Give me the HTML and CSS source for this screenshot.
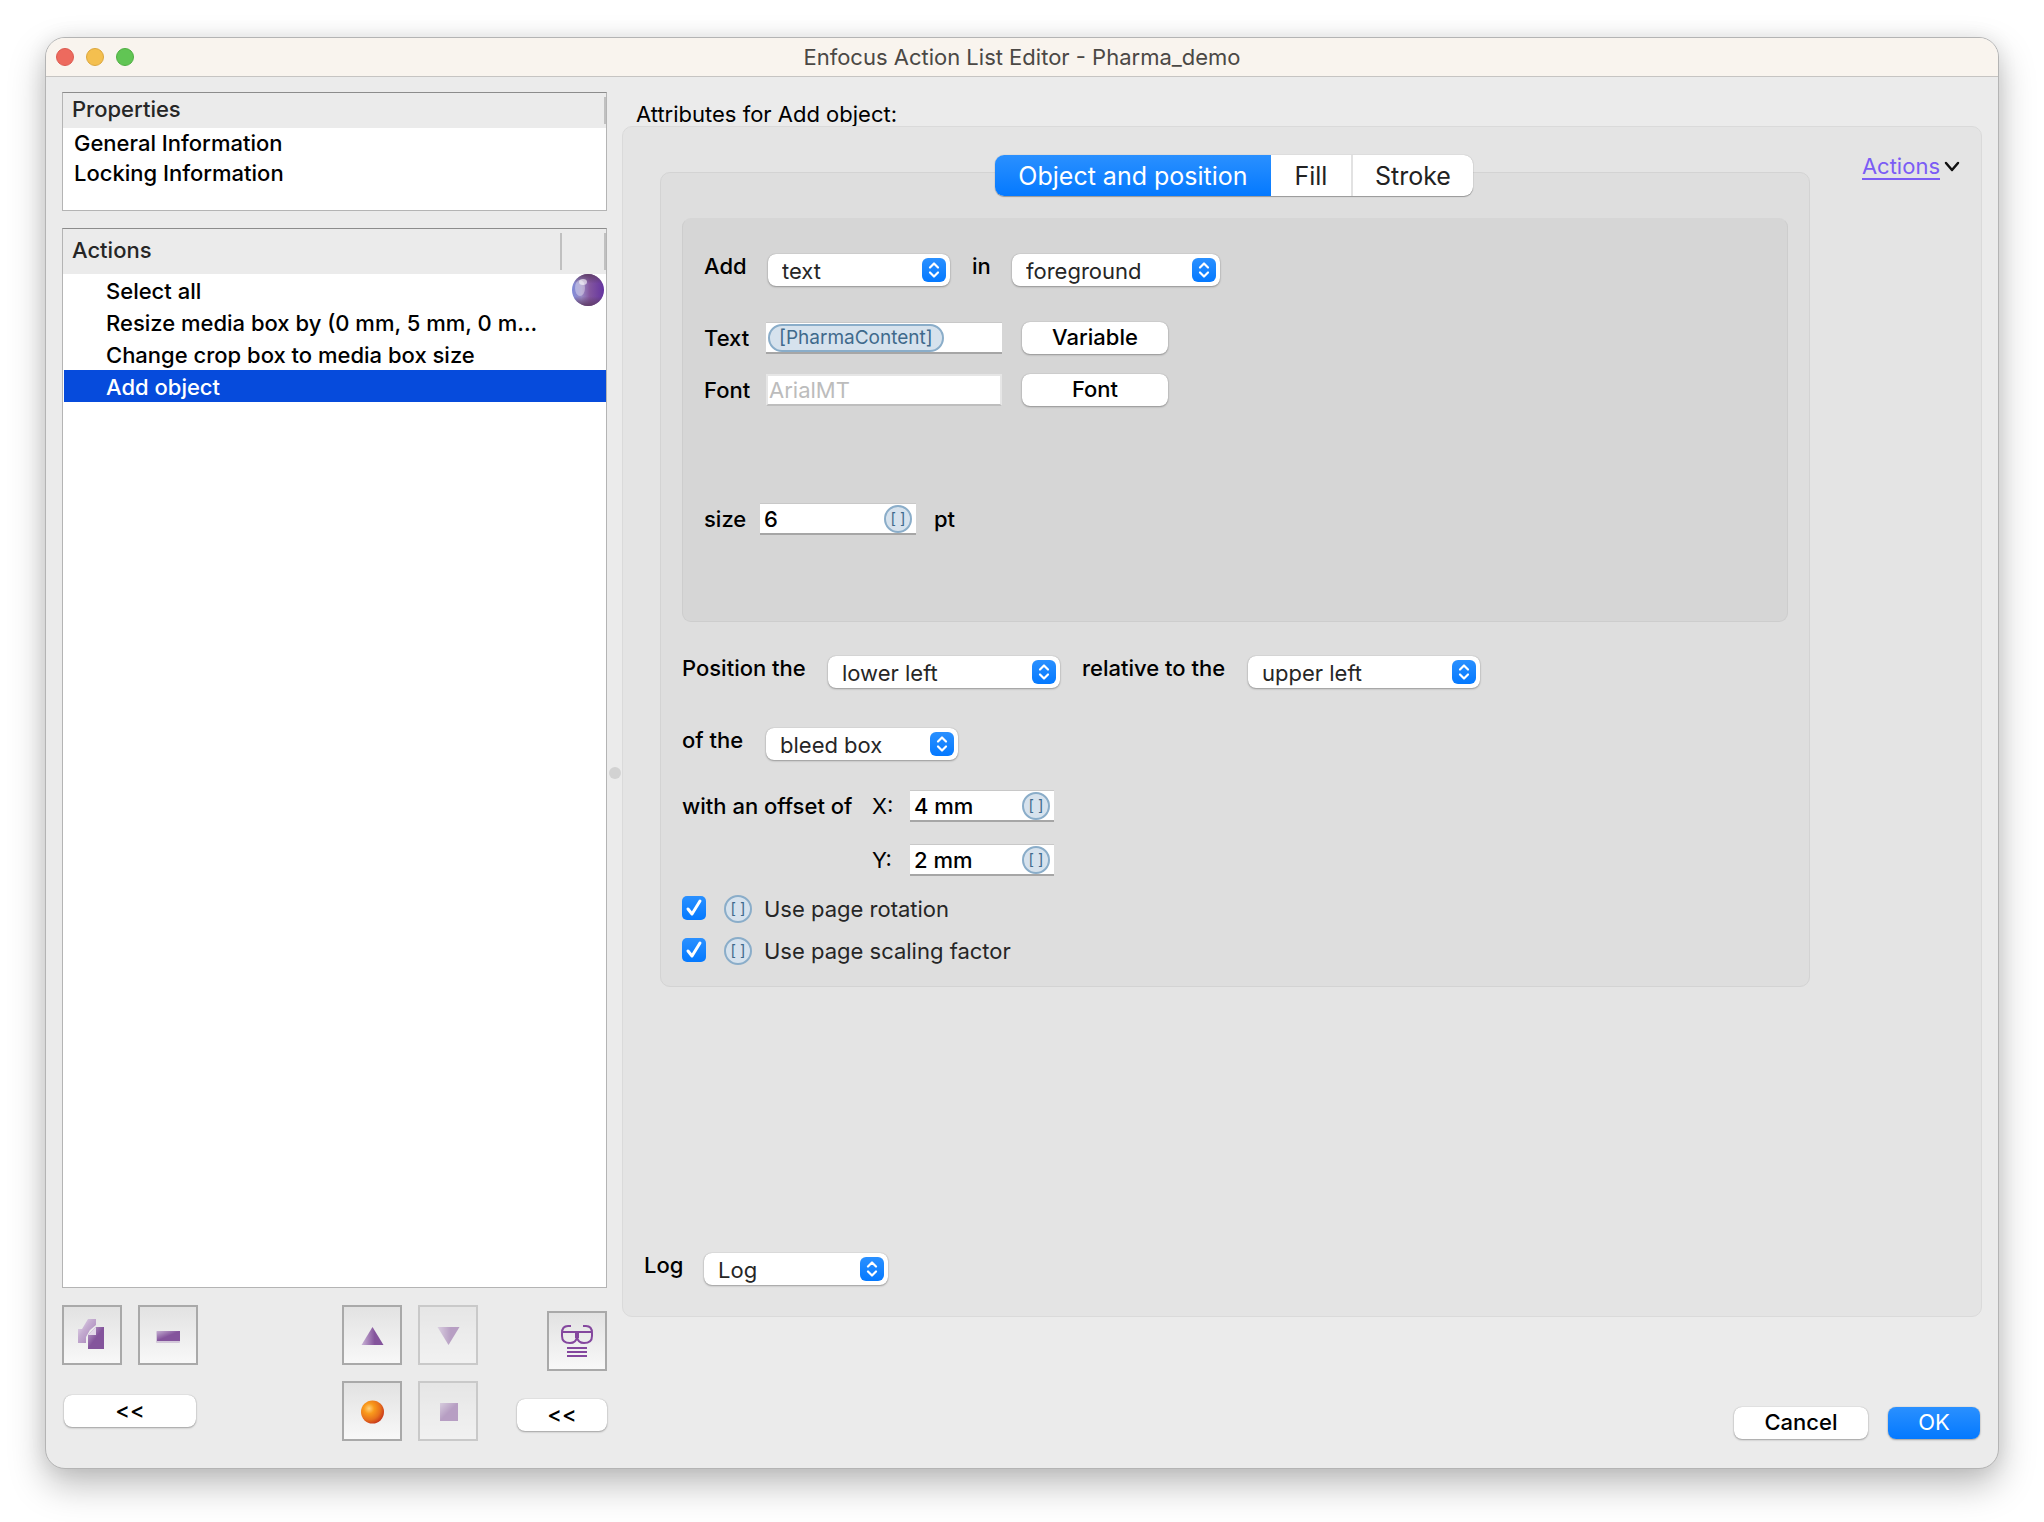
FILE: index.html
```html
<!DOCTYPE html>
<html lang="en">
<head>
<meta charset="utf-8">
<title>Enfocus Action List Editor - Pharma_demo</title>
<link rel="stylesheet" href="styles.css">
</head>
<body>
<svg class="defs" aria-hidden="true">
  <defs>
    <linearGradient id="blue" x1="0" y1="0" x2="0" y2="1"><stop offset="0" stop-color="#2a90ff"/><stop offset="1" stop-color="#0479ff"/></linearGradient>
    <linearGradient id="plum" x1="0" y1="0" x2="1" y2="1"><stop offset="0" stop-color="#c4aed1"/><stop offset=".5" stop-color="#84549c"/><stop offset="1" stop-color="#84549c"/></linearGradient>
    <linearGradient id="plum-side" x1="0" y1="0" x2="1" y2="0"><stop offset="0" stop-color="#c9b3d6"/><stop offset=".6" stop-color="#84549c"/></linearGradient>
    <linearGradient id="haze" x1="0" y1="0" x2="1" y2="1"><stop offset="0" stop-color="#eee6f2"/><stop offset=".4" stop-color="#c4acd0"/><stop offset="1" stop-color="#a27bb6"/></linearGradient>
    <radialGradient id="orange" cx=".35" cy=".35" r=".75"><stop offset="0" stop-color="#ffd07a"/><stop offset=".3" stop-color="#f99a1c"/><stop offset=".65" stop-color="#e8711c"/><stop offset="1" stop-color="#c02a1a"/></radialGradient>
    <linearGradient id="violet" x1="0" y1="0" x2="1" y2="0"><stop offset="0" stop-color="#7f8ad8"/><stop offset=".3" stop-color="#9a8ac4"/><stop offset=".55" stop-color="#83569f"/><stop offset="1" stop-color="#6433a0"/></linearGradient>
    <linearGradient id="rim" x1="0" y1="0" x2="0" y2="1"><stop offset="0" stop-color="#5f3d68"/><stop offset=".3" stop-color="#5f3d68" stop-opacity="0"/><stop offset=".7" stop-color="#5f3d68" stop-opacity="0"/><stop offset="1" stop-color="#5f3d68"/></linearGradient>
    <symbol id="stepper" viewBox="0 0 24 24"><rect width="24" height="24" rx="6" fill="url(#blue)"/><path d="M8 9.500l4-4 4 4M8 14.500l4 4 4-4" fill="none" stroke="#fff" stroke-width="2.200" stroke-linecap="round" stroke-linejoin="round"/></symbol>
  </defs>
</svg>
<main class="window">
  <header class="titlebar">
    <div class="lights"><i class="light red"></i><i class="light yellow"></i><i class="light green"></i></div>
    <h1 class="title">Enfocus Action List Editor - Pharma_demo</h1>
  </header>
  <div class="content">
    <aside class="sidebar">
      <section class="panel properties">
        <h2 class="panel-head"><span>Properties</span></h2>
        <ul class="list"><li>General Information</li><li>Locking Information</li></ul>
      </section>
      <section class="panel actions">
        <h2 class="panel-head tall"><span>Actions</span><i class="divider"></i></h2>
        <ul class="list steps">
          <li><span>Select all</span><svg class="ball" viewBox="0 0 32 32"><circle cx="16" cy="16" r="16" fill="url(#violet)"/><circle cx="16" cy="16" r="16" fill="url(#rim)"/><ellipse cx="8" cy="14" rx="5" ry="8" fill="#fff" opacity=".35"/><ellipse cx="11" cy="8" rx="4" ry="3" fill="#fff" opacity=".6"/></svg></li>
          <li><span>Resize media box by (0 mm, 5 mm, 0 m...</span></li>
          <li><span>Change crop box to media box size</span></li>
          <li class="selected"><span>Add object</span></li>
        </ul>
      </section>
      <div class="tools">
        <div class="group left">
          <button class="tool" aria-label="Duplicate"><svg viewBox="0 0 56 56"><path d="M14 22h4l6-10h8v6l-6 5-4 7v6h-8z" fill="url(#haze)"/><path d="M24 28l8-8h8v22H24z" fill="url(#plum)"/><path d="M24 28l8-8v8z" fill="#e4d9ea"/></svg></button>
          <button class="tool" aria-label="Remove"><svg viewBox="0 0 56 56"><rect x="16" y="24" width="24" height="12" rx="1" fill="#d3c8da"/><rect x="17" y="24" width="23" height="10" fill="url(#plum)"/></svg></button>
          <button class="push collapse">&lt;&lt;</button>
        </div>
        <div class="group middle">
          <button class="tool" aria-label="Move up"><svg viewBox="0 0 56 56"><path d="M28.500 20l11 18h-22z" fill="url(#plum-side)"/></svg></button>
          <button class="tool" aria-label="Move down" disabled><svg viewBox="0 0 56 56"><path d="M28.500 38l11-18h-22z" fill="url(#plum-side)"/></svg></button>
          <button class="tool" aria-label="Record"><svg viewBox="0 0 56 56"><circle cx="28.500" cy="29" r="11.500" fill="url(#orange)"/></svg></button>
          <button class="tool" aria-label="Stop" disabled><svg viewBox="0 0 56 56"><rect x="20" y="20" width="18" height="18" fill="url(#plum)"/></svg></button>
        </div>
        <div class="group right">
          <button class="tool" aria-label="Details"><svg viewBox="0 0 56 56"><g fill="none" stroke="#84479e" stroke-width="2"><path d="M22 13h-3q-6 0-6 7v3q0 7 8 7 6 0 7-6v-4v4q1 6 7 6 8 0 8-7v-3q0-7-6-7h-3M13 19h30M27 19v6M29 19v6M18 35h20M18 39h20M18 43h20"/></g></svg></button>
          <button class="push wide">&lt;&lt;</button>
        </div>
      </div>
    </aside>
    <div class="splitter"><i></i></div>
    <section class="detail">
      <h2 class="caption">Attributes for Add object:</h2>
      <div class="attributes">
        <div class="upper">
          <div class="tabbox">
            <div class="tabs" role="tablist">
              <button class="tab current" role="tab" aria-selected="true">Object and position</button>
              <button class="tab" role="tab">Fill</button>
              <button class="tab last" role="tab">Stroke</button>
            </div>
            <div class="textbox">
              <div class="row raised">
                <label for="kind">Add</label>
                <span class="popup kind"><select id="kind"><option>text</option></select><svg><use href="#stepper"/></svg></span>
                <label for="layer" class="in">in</label>
                <span class="popup layer"><select id="layer"><option>foreground</option></select><svg><use href="#stepper"/></svg></span>
              </div>
              <div class="row text-row">
                <label for="text" class="short">Text</label>
                <span class="field long"><span class="pill">[PharmaContent]</span><input id="text" type="text"></span>
                <button class="push medium">Variable</button>
              </div>
              <div class="row font-row">
                <label for="font" class="short">Font</label>
                <span class="field long off"><input id="font" type="text" value="ArialMT" disabled></span>
                <button class="push medium">Font</button>
              </div>
              <div class="row size-row">
                <label for="size" class="size">size</label>
                <span class="field size-field"><input id="size" type="text" value="6"><button class="var">[ ]</button></span>
                <span class="unit">pt</span>
              </div>
            </div>
            <div class="row raised position-row">
              <label for="corner">Position the</label>
              <span class="popup corner"><select id="corner"><option>lower left</option></select><svg><use href="#stepper"/></svg></span>
              <label for="anchor" class="relative-label">relative to the</label>
              <span class="popup corner"><select id="anchor"><option>upper left</option></select><svg><use href="#stepper"/></svg></span>
            </div>
            <div class="row raised of-row">
              <label for="box">of the</label>
              <span class="popup box"><select id="box"><option>bleed box</option></select><svg><use href="#stepper"/></svg></span>
            </div>
            <div class="offsets">
              <span>with an offset of</span>
              <label for="x" class="axis">X:</label>
              <span class="field offset"><input id="x" type="text" value="4 mm"><button class="var">[ ]</button></span>
              <label for="y" class="axis second">Y:</label>
              <span class="field offset"><input id="y" type="text" value="2 mm"><button class="var">[ ]</button></span>
            </div>
            <div class="checks">
              <div class="check"><span class="tick"><input id="rot" type="checkbox" checked><svg viewBox="0 0 24 24"><path d="M6 13l4 5 8-13"/></svg></span><button class="var">[ ]</button><label for="rot">Use page rotation</label></div>
              <div class="check"><span class="tick"><input id="scale" type="checkbox" checked><svg viewBox="0 0 24 24"><path d="M6 13l4 5 8-13"/></svg></span><button class="var">[ ]</button><label for="scale">Use page scaling factor</label></div>
            </div>
          </div>
          <div class="menu"><a href="#">Actions</a><svg viewBox="0 0 14 10"><path d="M1 1l6 7 6-7" fill="none" stroke="#111" stroke-width="2.500" stroke-linecap="round" stroke-linejoin="round"/></svg></div>
        </div>
        <div class="row raised log-row">
          <label for="log">Log</label>
          <span class="popup log"><select id="log"><option>Log</option></select><svg><use href="#stepper"/></svg></span>
        </div>
      </div>
      <footer class="footer"><button class="push cancel">Cancel</button><button class="push ok">OK</button></footer>
    </section>
  </div>
</main>
</body>
</html>
```
FILE: styles.css
```css
* { box-sizing: border-box; }
body {
  margin: 0;
  min-height: 100vh;
  padding: 37px 45px 53px;
  display: flex;
  background: #fff;
  color: #000;
  font: 500 22px/24px Inter, "Liberation Sans", sans-serif;
}
button, input, select { font: inherit; color: inherit; margin: 0; padding: 0; border: 0; border-radius: 0; }
h1, h2, ul { margin: 0; padding: 0; font: inherit; list-style: none; }
.defs { position: absolute; width: 0; height: 0; }

.window {
  flex: 1;
  display: flex;
  flex-direction: column;
  border: 1px solid #b4b4b4;
  border-radius: 20px;
  background: #ebebeb;
  box-shadow: 0 16px 36px rgba(0, 0, 0, .26), 0 0 20px rgba(0, 0, 0, .08);
  overflow: hidden;
}
.titlebar {
  display: grid;
  grid-template-columns: 1fr auto 1fr;
  align-items: center;
  height: 39px;
  padding: 0 10px;
  background: #f9f4ee;
  border-bottom: 1px solid #c6c4c2;
}
.lights { display: flex; gap: 12px; }
.light { width: 18px; height: 18px; border-radius: 50%; border: 1px solid #dc5a50; background: #ed6a5e; }
.yellow { background: #f4bf4f; border-color: #dba63c; }
.green { background: #61c554; border-color: #4fae42; }
.title { font-weight: 400; color: #4b4845; }

.content { flex: 1; display: flex; }
.sidebar { width: 561px; padding: 15px 0 27px 16px; display: flex; flex-direction: column; }
.panel { background: #fff; border: 1px solid #b4b4b4; border-top-color: #8c8c8c; }
.properties { height: 119px; margin-bottom: 17px; }
.actions { flex: 1; margin-bottom: 17px; }
.panel-head {
  display: flex;
  justify-content: space-between;
  height: 35px;
  padding: 4px 0 4px 9px;
  line-height: 24px;
  background: #ebebeb;
  color: #262626;
}
.panel-head::after { content: ""; width: 2px; background: #c0c0c0; }
.panel-head span { flex: 1; }
.tall { height: 45px; line-height: 34px; }
.divider { width: 2px; margin-right: 42px; background: #c0c0c0; }
.list { margin-left: 1px; }
.list li { padding-left: 10px; line-height: 30px; }
.steps .selected, .steps li { display: flex; justify-content: space-between; height: 32px; padding: 0 2px 0 42px; line-height: 34px; white-space: nowrap; }
.steps .selected { background: #064bdc; color: #fff; }
.ball { width: 32px; height: 32px; }

.tools { display: flex; justify-content: space-between; height: 136px; }
.group { display: grid; gap: 16px; align-content: start; }
.left { grid-template-columns: 60px 60px; gap: 30px 16px; }
.middle { grid-template-columns: 60px 60px; margin-left: 105px; }
.right { padding-top: 6px; gap: 28px; justify-items: end; }
.collapse { grid-column: 1 / 3; margin: 0 2px; }
.wide { width: 90px; }
.tool { width: 60px; height: 60px; border: 2px solid #a9a9a9; background: linear-gradient(#e2e2e2, #f8f8f8); }
.tool svg { display: block; width: 56px; height: 56px; }
.tool:disabled { opacity: .5; }

.push {
  height: 32px;
  padding-bottom: 2px;
  border-radius: 8px;
  background: #fff;
  text-align: center;
  line-height: 28px;
  box-shadow: 0 0 1px rgba(0, 0, 0, .3), 0 1px 2px rgba(0, 0, 0, .3);
}
.medium { width: 146px; }
.cancel { width: 134px; }
.ok { width: 92px; color: #fff; background: linear-gradient(#2a90ff, #0479ff); font-weight: 400; }

.splitter { width: 15px; display: flex; align-items: center; justify-content: center; }
.splitter i { width: 12px; height: 12px; border-radius: 50%; background: #d2d2d2; }

.detail { flex: 1; padding: 25px 16px 29px 0; display: flex; flex-direction: column; }
.caption { padding-left: 14px; font-weight: 400; }
.attributes { flex: 1; display: flex; flex-direction: column; border: 1px solid #dadada; border-radius: 10px; background: #e4e4e4; padding: 45px 22px 31px 21px; }
.upper { display: flex; align-items: flex-start; justify-content: space-between; padding-left: 16px; }
.tabbox { flex: 1; margin-right: 52px; border: 1px solid #d3d3d3; border-radius: 10px; background: #dedede; padding: 0 21px 21px; display: flex; flex-direction: column; }
.tabs { align-self: center; display: flex; margin: -18px 2px 22px 0; height: 41px; border-radius: 9px; background: #fff; box-shadow: 0 0 1px rgba(0, 0, 0, .3), 0 1px 1px rgba(0, 0, 0, .3); overflow: hidden; }
.tab { width: 80px; background: none; font-size: 25px; font-weight: 400; color: #222; }
.current { width: 276px; color: #fff; background: linear-gradient(#2a90ff, #0479ff); }
.last { width: 122px; border-left: 2px solid #e2e2e2; }
.textbox { height: 404px; padding: 35px 21px 0; border: 1px solid #cdcdcd; border-top-color: #d6d6d6; border-radius: 9px; background: #d6d6d6; }

.row { display: flex; align-items: center; line-height: 32px; }
.raised { align-items: flex-start; line-height: 24px; }
.popup { display: grid; width: 182px; }
.popup select {
  grid-area: 1 / 1;
  width: 100%;
  height: 32px;
  padding: 2px 14px 0;
  line-height: 30px;
  appearance: none;
  border-radius: 8px;
  background: #fff;
  color: #262626;
  font-weight: 400;
  box-shadow: 0 0 1px rgba(0, 0, 0, .3), 0 1px 2px rgba(0, 0, 0, .3);
}
.popup svg { grid-area: 1 / 1; justify-self: end; width: 24px; height: 24px; margin: 4px 4px 0 0; pointer-events: none; }
.textbox .raised label { width: 64px; }
.textbox .raised .in { width: 40px; margin-left: 22px; }
.popup.layer { width: 208px; }
.popup.corner { width: 232px; }
.popup.box { width: 192px; }
.popup.log { width: 184px; }
.short { width: 62px; }
.field { display: flex; align-items: center; height: 32px; background: #fff; border-top: 1px solid #c8c8c8; border-bottom: 2px solid #a6a6a6; }
.field input { flex: 1; min-width: 0; width: 0; height: 28px; padding-left: 4px; background: none; line-height: 28px; }
.long { width: 236px; margin-right: 20px; padding-left: 2px; }
.pill { height: 28px; padding: 0 9px; border: 2px solid #8aadc9; border-radius: 14px; background: #d6e2ed; color: #3f6a8c; font-size: 19px; line-height: 24px; font-weight: 400; }
.off { border: 2px solid #e6e6e6; border-bottom-color: #bebebe; padding: 0; }
.off input { padding-left: 1px; color: #bcbcbc; font-weight: 400; }
.var { flex: none; width: 28px; height: 28px; border: 2px solid #8aadc9; border-radius: 50%; background: #d6e2ed; color: #3f6a8c; font-size: 15px; line-height: 20px; font-weight: 400; }
.field .var { margin-right: 4px; }
.text-row { margin-top: 36px; }
.font-row { margin-top: 20px; }
.size-row { margin-top: 97px; }
.size { width: 56px; }
.size-field { width: 156px; }
.unit { margin-left: 18px; }
.position-row { margin-top: 34px; }
.position-row label { width: 146px; }
.position-row .relative-label { width: 166px; margin-left: 22px; }
.of-row { margin-top: 40px; }
.of-row label { width: 84px; }
.offsets { display: grid; grid-template-columns: 190px 38px 144px; row-gap: 22px; margin-top: 30px; line-height: 32px; }
.second { grid-column: 2; }
.axis { font-weight: 400; }
.checks { display: grid; gap: 14px; margin-top: 19px; }
.check { display: flex; align-items: center; height: 28px; }
.check label { margin-left: 12px; font-weight: 400; color: #262626; }
.tick { display: grid; width: 24px; height: 24px; margin: 0 18px 2px 0; }
.tick input { grid-area: 1 / 1; width: 24px; height: 24px; appearance: none; border-radius: 5px; background: linear-gradient(#2a90ff, #0479ff); }
.tick svg { grid-area: 1 / 1; pointer-events: none; fill: none; stroke: #fff; stroke-width: 3; stroke-linecap: round; stroke-linejoin: round; }

.menu { display: flex; align-items: center; gap: 5px; margin-top: -18px; }
.menu a { color: #7b5cf5; font-weight: 400; text-decoration: none; border-bottom: 2px solid #7b5cf5; }
.menu svg { width: 14px; height: 10px; overflow: visible; }
.log-row { margin-top: auto; }
.log-row label { width: 60px; }
.footer { display: flex; justify-content: flex-end; gap: 20px; margin-top: 90px; padding-right: 2px; }
```
